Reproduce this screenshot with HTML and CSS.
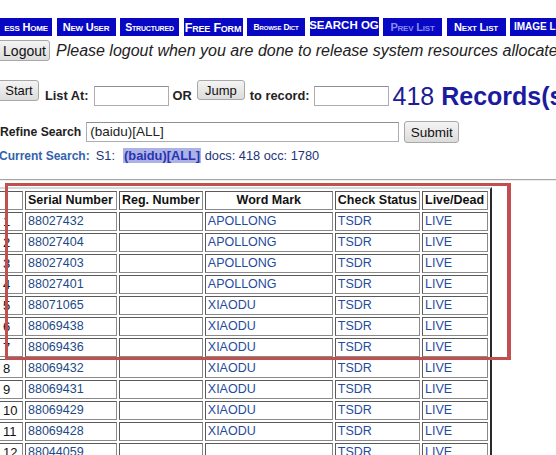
FILE: index.html
```html
<!DOCTYPE html>
<html>
<head>
<meta charset="utf-8">
<link rel="stylesheet" href="styles.css">
</head>
<body>
<div class="page">
  <div class="nav">
    <div class="nb nb1">ess Home</div>
    <div class="nb nb2">New User</div>
    <div class="nb nb3 small">Structured</div>
    <div class="nb nb4 big">Free Form</div>
    <div class="nb nb5 tiny">Browse Dict</div>
    <div class="nb nb6 caps">SEARCH OG</div>
    <div class="nb nb7 dim">Prev List</div>
    <div class="nb nb8">Next List</div>
    <div class="nb nb9 caps2">IMAGE LIST</div>
  </div>

  <div class="logout-row">
    <button class="btn btn-logout">Logout</button>
    <span class="note">Please logout when you are done to release system resources allocated for me.</span>
  </div>

  <div class="list-row">
    <button class="btn btn-start">Start</button>
    <span class="lbl lbl-list">List At:</span>
    <span class="inp inp-list"></span>
    <span class="lbl lbl-or">OR</span>
    <button class="btn btn-jump">Jump</button>
    <span class="lbl lbl-rec">to record:</span>
    <span class="inp inp-rec"></span>
    <span class="count"><span class="num">418</span> <b>Records(s) found</b></span>
  </div>

  <div class="refine-row">
    <span class="lbl lbl-refine">Refine Search</span>
    <span class="inp inp-refine">(baidu)[ALL]</span>
    <button class="btn btn-submit">Submit</button>
  </div>

  <div class="current">
    <b class="cs-label">Current Search:</b>
    <span class="cs-s1">S1:</span>
    <b class="cs-hl">(baidu)[ALL]</b>
    <span class="cs-docs">docs: 418 occ: 1780</span>
  </div>

  <hr class="rule">

  <table class="results">
    <tr>
      <th class="c0"></th>
      <th class="c1">Serial Number</th>
      <th class="c2">Reg. Number</th>
      <th class="c3">Word Mark</th>
      <th class="c4">Check Status</th>
      <th class="c5">Live/Dead</th>
    </tr>
    <tr><td class="n">1</td><td class="lk">88027432</td><td></td><td class="lk2">APOLLONG</td><td class="lk2">TSDR</td><td class="lk2">LIVE</td></tr>
    <tr><td class="n">2</td><td class="lk">88027404</td><td></td><td class="lk2">APOLLONG</td><td class="lk2">TSDR</td><td class="lk2">LIVE</td></tr>
    <tr><td class="n">3</td><td class="lk">88027403</td><td></td><td class="lk2">APOLLONG</td><td class="lk2">TSDR</td><td class="lk2">LIVE</td></tr>
    <tr><td class="n">4</td><td class="lk">88027401</td><td></td><td class="lk2">APOLLONG</td><td class="lk2">TSDR</td><td class="lk2">LIVE</td></tr>
    <tr><td class="n">5</td><td class="lk">88071065</td><td></td><td class="lk2">XIAODU</td><td class="lk2">TSDR</td><td class="lk2">LIVE</td></tr>
    <tr><td class="n">6</td><td class="lk">88069438</td><td></td><td class="lk2">XIAODU</td><td class="lk2">TSDR</td><td class="lk2">LIVE</td></tr>
    <tr><td class="n">7</td><td class="lk">88069436</td><td></td><td class="lk2">XIAODU</td><td class="lk2">TSDR</td><td class="lk2">LIVE</td></tr>
    <tr><td class="n">8</td><td class="lk">88069432</td><td></td><td class="lk2">XIAODU</td><td class="lk2">TSDR</td><td class="lk2">LIVE</td></tr>
    <tr><td class="n">9</td><td class="lk">88069431</td><td></td><td class="lk2">XIAODU</td><td class="lk2">TSDR</td><td class="lk2">LIVE</td></tr>
    <tr><td class="n">10</td><td class="lk">88069429</td><td></td><td class="lk2">XIAODU</td><td class="lk2">TSDR</td><td class="lk2">LIVE</td></tr>
    <tr><td class="n">11</td><td class="lk">88069428</td><td></td><td class="lk2">XIAODU</td><td class="lk2">TSDR</td><td class="lk2">LIVE</td></tr>
    <tr><td class="n">12</td><td class="lk">88044059</td><td></td><td class="lk2"></td><td class="lk2">TSDR</td><td class="lk2">LIVE</td></tr>
  </table>

  <div class="annot"></div>
</div>
</body>
</html>
```

FILE: styles.css
```css
html, body {
  margin: 0;
  padding: 0;
  background: #fff;
}
body {
  width: 556px;
  height: 455px;
  overflow: hidden;
  font-family: "Liberation Sans", Arial, sans-serif;
  color: #1a1a1a;
}
.page {
  position: relative;
  width: 556px;
  height: 455px;
  overflow: hidden;
}

/* nav bar */
.nav {
  display: flex;
  align-items: flex-end;
  gap: 4.5px;
  height: 19px;
  margin-top: 17px;
  white-space: nowrap;
}
.nb {
  flex: none;
  height: 18px;
  background: #0707c4;
  color: #fff;
  font-weight: bold;
  font-variant: small-caps;
  font-size: 11px;
  display: flex;
  align-items: center;
  justify-content: center;
  overflow: hidden;
  letter-spacing: -0.2px;
}
.nb1 { width: 52px; }
.nb2 { width: 59px; }
.nb3 { width: 59px; }
.nb4 { width: 59px; }
.nb5 { width: 58px; }
.nb6 { width: 69px; height: 19px; align-items: flex-start; padding-top: 2px; box-sizing: border-box; }
.nb7 { width: 59px; }
.nb8 { width: 59px; }
.nb9 { width: 60px; justify-content: flex-start; padding-left: 4px; box-sizing: border-box; align-items: flex-start; padding-top: 3px; }
.nb.small { font-size: 10.5px; }
.nb.big { font-size: 12.5px; padding-top: 2px; box-sizing: border-box; }
.nb.tiny { font-size: 8.5px; }
.nb.caps { font-variant: normal; font-size: 11.5px; letter-spacing: 0; }
.nb.caps2 { font-variant: normal; font-size: 10px; letter-spacing: 0; }
.nb.dim { color: #8a8af2; }

/* buttons */
.btn {
  flex: none;
  font-family: "Liberation Sans", Arial, sans-serif;
  font-size: 13px;
  color: #111;
  background: linear-gradient(#f4f4f4, #dcdcdc);
  border: 1px solid #a8a8a8;
  border-radius: 3px;
  padding: 0;
  margin: 0;
  box-sizing: border-box;
}

.logout-row {
  display: flex;
  align-items: center;
  height: 21px;
  margin-top: 4px;
  white-space: nowrap;
}
.btn-logout {
  width: 57px;
  height: 21px;
  margin-left: -7px;
  padding-left: 6px;
  font-size: 14px;
}
.note {
  flex: none;
  margin-left: 6px;
  font-style: italic;
  font-size: 16px;
  color: #222;
}

/* list row */
.list-row {
  display: flex;
  align-items: flex-start;
  height: 26px;
  margin-top: 19px;
  white-space: nowrap;
}
.lbl {
  flex: none;
  font-weight: bold;
  font-size: 12.8px;
  color: #222;
  line-height: 20px;
  align-self: flex-end;
}
.inp {
  flex: none;
  display: block;
  box-sizing: border-box;
  height: 20px;
  border: 1px solid #abadb3;
  border-top-color: #8e9096;
  background: #fff;
  align-self: flex-end;
  font-size: 13.5px;
  line-height: 18px;
  padding-left: 3px;
  color: #222;
}
.btn-start { width: 43px; height: 21px; margin-left: -4px; padding-left: 3px; }
.lbl-list { margin-left: 6px; }
.inp-list { width: 75px; margin-left: 5px; }
.lbl-or { margin-left: 4px; }
.btn-jump { width: 48px; height: 20px; margin-left: 5px; }
.lbl-rec { margin-left: 5px; }
.inp-rec { width: 75px; margin-left: 4px; }
.count {
  flex: none;
  align-self: flex-end;
  margin-left: 4px;
  margin-bottom: -4px;
  font-size: 25px;
  line-height: 28px;
  color: #1c1c94;
}
.count b { color: #1b1ba0; }

/* refine row */
.refine-row {
  display: flex;
  align-items: center;
  height: 22px;
  margin-top: 15px;
  white-space: nowrap;
}
.refine-row .lbl { align-self: center; }
.lbl-refine { font-size: 12.2px; }
.inp-refine { width: 313px; margin-left: 5px; align-self: center; }
.btn-submit { width: 55px; height: 22px; margin-left: 5px; font-size: 13.5px; }

/* current search */
.current {
  margin-top: 5px;
  margin-left: -1px;
  font-size: 12.8px;
  line-height: 16px;
  white-space: nowrap;
  color: #23357a;
}
.cs-label { color: #3462ad; font-size: 12px; }
.cs-s1 { margin-left: 2.5px; }
.cs-hl {
  margin-left: 4.5px;
  background: #acb2e4;
  color: #2a33b4;
  padding: 0 1px;
}
.cs-docs { margin-left: 0; }

.rule {
  margin: 15px 0 0 0;
  border: 0;
  border-top: 1px solid #a6a6a6;
  border-bottom: 1px solid #ececec;
  height: 0;
}

/* results table */
.results {
  margin-top: 6px;
  margin-left: -6px;
  border-collapse: separate;
  border-spacing: 2px;
  table-layout: fixed;
  border: 2px solid;
  border-color: #d8d8d8 #2a2a2a #2a2a2a #d8d8d8;
  font-size: 12.5px;
  white-space: nowrap;
}
.results th, .results td {
  border: 1px solid #5a5a5a;
  border-right-color: #8a8a8a;
  border-bottom-color: #8a8a8a;
  padding: 0 2px;
  height: 17px;
  line-height: 17px;
  overflow: hidden;
  text-align: left;
}
.results th {
  font-weight: bold;
  color: #111;
}
.results th.c3 { text-align: center; }
.c0 { width: 18px; padding-left: 4px !important; padding-right: 1px !important; }
.c1 { width: 86px; }
.c2 { width: 77px; }
.c3 { width: 122px; }
.c4 { width: 79px; }
.c5 { width: 60px; }
.results td.n {
  padding-left: 4px;
  padding-right: 1px;
  font-size: 13px;
  color: #111;
}
.lk { color: #1d4a86; }
.lk2 { color: #1f4c9c; }

/* annotation overlay */
.annot {
  position: absolute;
  left: 5px;
  top: 183px;
  width: 506px;
  height: 177px;
  box-sizing: border-box;
  border: 3px solid #c24f4f;
  border-right-width: 4px;
  pointer-events: none;
}
```
